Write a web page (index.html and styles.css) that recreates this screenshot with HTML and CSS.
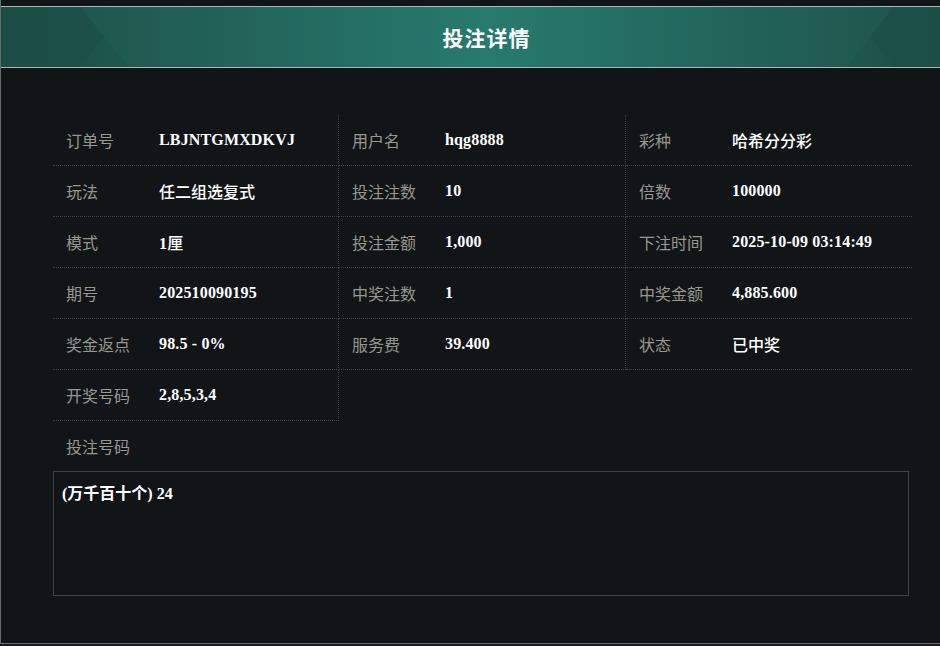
FILE: index.html
```html
<!DOCTYPE html>
<html lang="zh-CN">
<head>
<meta charset="utf-8">
<title>投注详情</title>
<link rel="stylesheet" href="styles.css">
</head>
<body>
<div class="modal">
  <div class="modal-top"></div>
  <div class="header">
    <svg class="deco" width="972" height="60" viewBox="0 0 972 60" preserveAspectRatio="none">
      <polygon points="0,0 80,0 103,30 80,60 0,60" fill="#1b4a43" opacity="0.55"/>
      <polygon points="103,30 80,60 128,60" fill="#1d4f47" opacity="0.45"/>
      <polygon points="972,0 893,0 870,30 893,60 972,60" fill="#1b4a43" opacity="0.55"/>
      <polygon points="870,30 893,60 847,60" fill="#1d4f47" opacity="0.45"/>
    </svg>
    <h1 class="title">投注详情</h1>
  </div>
  <div class="body">
    <div class="grid">
      <div class="cell br"><span class="label">订单号</span><span class="value">LBJNTGMXDKVJ</span></div>
      <div class="cell br"><span class="label">用户名</span><span class="value">hqg8888</span></div>
      <div class="cell"><span class="label">彩种</span><span class="value cn">哈希分分彩</span></div>

      <div class="cell br"><span class="label">玩法</span><span class="value cn">任二组选复式</span></div>
      <div class="cell br"><span class="label">投注注数</span><span class="value">10</span></div>
      <div class="cell"><span class="label">倍数</span><span class="value">100000</span></div>

      <div class="cell br"><span class="label">模式</span><span class="value">1<span class="cn">厘</span></span></div>
      <div class="cell br"><span class="label">投注金额</span><span class="value">1,000</span></div>
      <div class="cell"><span class="label">下注时间</span><span class="value">2025-10-09 03:14:49</span></div>

      <div class="cell br"><span class="label">期号</span><span class="value">202510090195</span></div>
      <div class="cell br"><span class="label">中奖注数</span><span class="value">1</span></div>
      <div class="cell"><span class="label">中奖金额</span><span class="value">4,885.600</span></div>

      <div class="cell br"><span class="label">奖金返点</span><span class="value">98.5 - 0%</span></div>
      <div class="cell br"><span class="label">服务费</span><span class="value">39.400</span></div>
      <div class="cell"><span class="label">状态</span><span class="value cn">已中奖</span></div>

      <div class="cell br"><span class="label">开奖号码</span><span class="value">2,8,5,3,4</span></div>
    </div>
    <div class="bet-label"><span class="label">投注号码</span></div>
    <div class="bet-box">(万千百十个) 24</div>
  </div>
</div>
</body>
</html>
```

FILE: styles.css
```css
* { box-sizing: border-box; }
html, body {
  margin: 0;
  padding: 0;
  background: #1a1b1c;
  overflow: hidden;
  width: 940px;
  height: 646px;
}
body {
  font-family: "Liberation Serif", "Noto Sans CJK SC", serif;
  color: #fff;
}
.modal {
  width: 972px;
  height: 644px;
  background: #121518;
  border-left: 1px solid #666b6e;
  border-bottom: 1px solid #6a6f72;
  display: flex;
  flex-direction: column;
}
.modal-top {
  height: 6px;
  background: #121518;
  flex: none;
}
.header {
  position: relative;
  height: 62px;
  flex: none;
  border-top: 1px solid #a9b8b5;
  border-bottom: 1px solid #a9b8b5;
  background: linear-gradient(90deg, #1d5048 0%, #22645a 25%, #287a6e 50%, #22645a 75%, #1d5048 100%);
  display: flex;
  align-items: center;
  justify-content: center;
}
.deco {
  position: absolute;
  left: 0;
  top: 0;
  width: 100%;
  height: 100%;
}
.title {
  position: relative;
  margin: 0;
  font-family: "Noto Sans CJK SC", sans-serif;
  font-size: 21px;
  font-weight: 700;
  letter-spacing: 1px;
  color: #ffffff;
}
.body {
  padding: 47px 0 0 52px;
}
.grid {
  display: grid;
  grid-template-columns: 286px 287px 286px;
}
.cell {
  height: 51px;
  border-bottom: 1px dotted #3e4245;
  display: flex;
  align-items: center;
  padding-left: 13px;
}
.cell.br {
  border-right: 1px dotted #3e4245;
}
.label {
  width: 93px;
  flex: none;
  font-family: "Noto Sans CJK SC", sans-serif;
  font-size: 16px;
  color: #97978f;
}
.value {
  font-family: "Liberation Serif", "Noto Sans CJK SC", serif;
  font-size: 16px;
  font-weight: 700;
  color: #ffffff;
  white-space: nowrap;
  letter-spacing: 0.15px;
}
.cn {
  font-family: "Noto Sans CJK SC", sans-serif;
  font-weight: 500;
  letter-spacing: 0;
}
.bet-label {
  height: 50px;
  display: flex;
  align-items: center;
  padding-left: 13px;
}
.bet-box {
  width: 856px;
  height: 125px;
  border: 1px solid #404346;
  padding: 12px 8px;
  font-size: 16px;
  font-weight: 700;
  color: #ffffff;
  line-height: 20px;
}
```
